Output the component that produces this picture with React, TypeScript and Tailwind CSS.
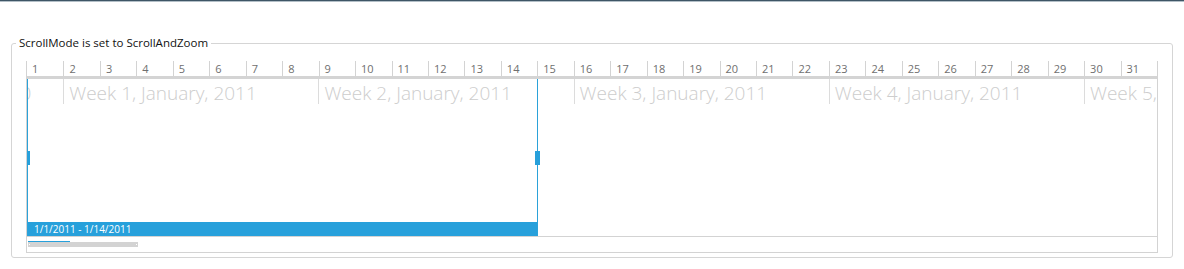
import React from 'react';

const days = Array.from({ length: 31 }, (_, i) => i + 1);

const weeks = [
  'Week 53, December, 2010',
  'Week 1, January, 2011',
  'Week 2, January, 2011',
  'Week 3, January, 2011',
  'Week 4, January, 2011',
  'Week 5, January, 2011',
];

const Timeline: React.FC = () => {
  return (
    <div className="relative flex h-[192px] min-w-0 flex-col border-x border-b border-[#d3d3d3] bg-white">
      {/* day ticks */}
      <div className="grid h-[15px] grid-cols-[repeat(31,minmax(0,1fr))]">
        {days.map((d) => (
          <div
            key={d}
            className="border-l border-[#d3d3d3] pl-[5px] text-[11px] leading-[15px] text-[#6f6f6f] first:border-l-0"
          >
            {d}
          </div>
        ))}
      </div>
      <div className="h-[3px] bg-[#d4d4d4]" />

      {/* body */}
      <div className="relative flex-1 overflow-hidden border-b border-[#d3d3d3]">
        <div className="ml-[-219px] flex">
          {weeks.map((w, i) => (
            <div
              key={i}
              className={
                'h-[25px] w-[255.2px] shrink-0 overflow-hidden whitespace-nowrap border-l border-[#dcdcdc] pl-[5px] text-[19px] font-light leading-[28px] text-[#cdcdcd] ' +
                (i === 0 ? 'indent-[-7px]' : '')
              }
            >
              {w}
            </div>
          ))}
        </div>

        {/* selected range */}
        <div className="absolute left-0 top-[-1px] bottom-0 flex w-[511px] flex-col justify-end border border-b-0 border-[#2ba2d9]">
          <div className="h-[14px] bg-[#27a0db] pl-[6px] text-[10px] leading-[14px] text-white">
            1/1/2011 - 1/14/2011
          </div>
          <div className="absolute left-[-1px] top-[72px] h-[14px] w-[3px] bg-[#27a0db]" />
          <div className="absolute right-[-3px] top-[72px] h-[14px] w-[5px] bg-[#27a0db]" />
        </div>
      </div>

      {/* scrollbar */}
      <div className="h-[15px] pl-px pt-[5px]">
        <div className="relative h-[5px] w-[110px] bg-[#d3d3d3]">
          <div className="absolute left-0 top-[-1px] h-px w-[42px] bg-[#27a0db]" />
          <div className="absolute left-[1px] top-[2px] h-px w-px bg-white" />
          <div className="absolute right-[1px] top-[2px] h-px w-px bg-white" />
        </div>
      </div>
    </div>
  );
};

export default function App() {
  return (
    <div className="h-[269px] w-full bg-white font-['Open_Sans',sans-serif]">
      <div className="h-px bg-[#3f5666]" />
      <div className="h-px bg-[#b3bfc7]" />
      <fieldset className="mx-[11px] mt-[33px] min-w-0 rounded-[3px] border border-[#d5d5d5] px-[14px] pb-[4px] pt-[10px]">
        <legend className="ml-[-10px] px-[3px] text-[11.5px] leading-[16px] text-[#111]">
          ScrollMode is set to ScrollAndZoom
        </legend>
        <Timeline />
      </fieldset>
    </div>
  );
}
